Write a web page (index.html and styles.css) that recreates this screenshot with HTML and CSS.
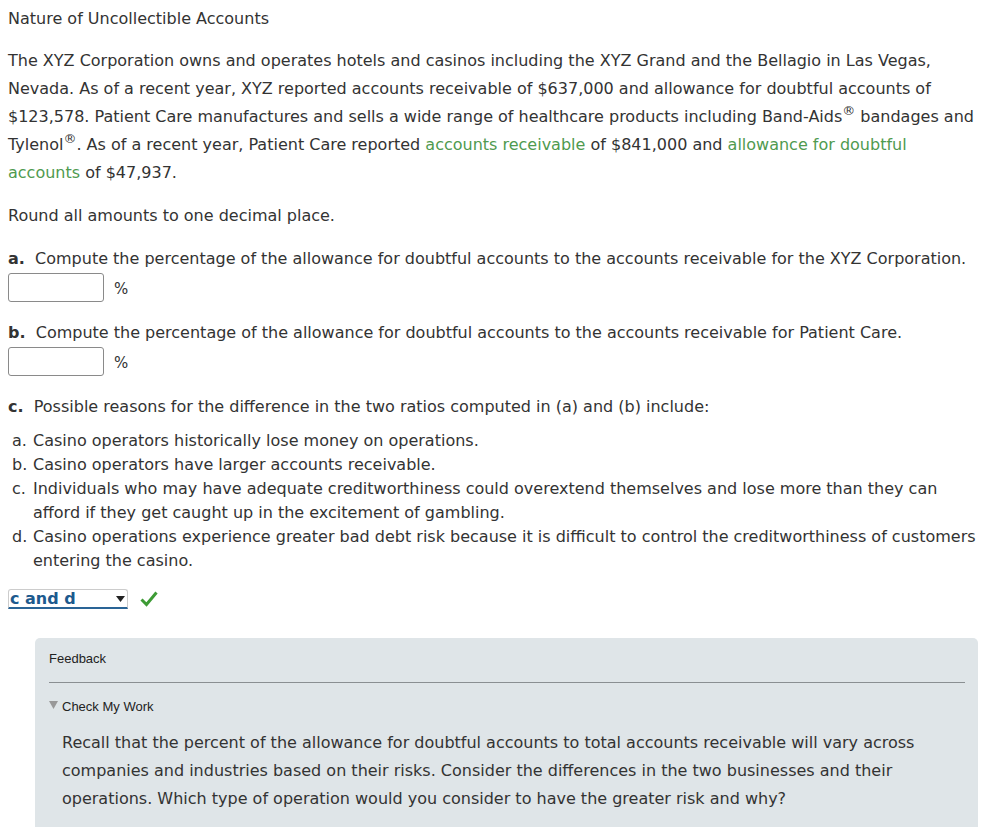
FILE: index.html
```html
<!DOCTYPE html>
<html lang="en">
<head>
<meta charset="utf-8">
<title>Nature of Uncollectible Accounts</title>
<link rel="stylesheet" href="styles.css">
</head>
<body>
<div class="page">
  <h1 class="title">Nature of Uncollectible Accounts</h1>
  <p class="intro">The XYZ Corporation owns and operates hotels and casinos including the XYZ Grand and the Bellagio in Las Vegas, Nevada. As of a recent year, XYZ reported accounts receivable of $637,000 and allowance for doubtful accounts of $123,578. Patient Care manufactures and sells a wide range of healthcare products including Band-Aids<sup class="reg">®</sup> bandages and Tylenol<sup class="reg">®</sup>. As of a recent year, Patient Care reported <span class="term">accounts receivable</span> of $841,000 and <span class="term">allowance for doubtful</span> <span class="term">accounts</span> of $47,937.</p>
  <p class="note">Round all amounts to one decimal place.</p>

  <div class="question">
    <p class="q-text"><b>a.</b>&nbsp; Compute the percentage of the allowance for doubtful accounts to the accounts receivable for the XYZ Corporation.</p>
    <div class="answer-row"><span class="input-box"></span><span class="unit">%</span></div>
  </div>

  <div class="question">
    <p class="q-text"><b>b.</b>&nbsp; Compute the percentage of the allowance for doubtful accounts to the accounts receivable for Patient Care.</p>
    <div class="answer-row"><span class="input-box"></span><span class="unit">%</span></div>
  </div>

  <div class="question">
    <p class="q-text"><b>c.</b>&nbsp; Possible reasons for the difference in the two ratios computed in (a) and (b) include:</p>
    <ol class="options">
      <li><span class="opt-label">a.</span><span>Casino operators historically lose money on operations.</span></li>
      <li><span class="opt-label">b.</span><span>Casino operators have larger accounts receivable.</span></li>
      <li><span class="opt-label">c.</span><span>Individuals who may have adequate creditworthiness could overextend themselves and lose more than they can afford if they get caught up in the excitement of gambling.</span></li>
      <li><span class="opt-label">d.</span><span>Casino operations experience greater bad debt risk because it is difficult to control the creditworthiness of customers entering the casino.</span></li>
    </ol>
    <div class="select-row">
      <span class="select">
        <span class="select-value">c and d</span>
        <svg class="select-arrow" width="9" height="6" viewBox="0 0 9 6"><path d="M0 0 H9 L4.5 6 Z" fill="#222"/></svg>
      </span>
      <svg class="check" width="18" height="16" viewBox="0 0 18 16"><path d="M1.5 8.5 L6.5 13.5 L16.5 1.5" fill="none" stroke="#3d9b35" stroke-width="3" stroke-linejoin="miter"/></svg>
    </div>
  </div>

  <section class="feedback">
    <div class="fb-head">Feedback</div>
    <div class="fb-body">
      <div class="fb-toggle"><svg class="fb-tri" width="9" height="8" viewBox="0 0 9 8"><path d="M0 0 H9 L4.5 8 Z" fill="#999"/></svg><span>Check My Work</span></div>
      <p class="fb-text">Recall that the percent of the allowance for doubtful accounts to total accounts receivable will vary across companies and industries based on their risks. Consider the differences in the two businesses and their operations. Which type of operation would you consider to have the greater risk and why?</p>
    </div>
  </section>
</div>
</body>
</html>
```

FILE: styles.css
```css
html, body {
  margin: 0;
  padding: 0;
  background: #fff;
}
body {
  padding: 0 8px;
  font-family: "DejaVu Sans", Verdana, sans-serif;
  font-size: 16px;
  color: #333;
}
.page {
  padding-top: 8px;
}
.title {
  font-size: 16px;
  font-weight: normal;
  margin: 0;
  line-height: 22px;
}
.intro {
  margin: 17px 0 0;
  line-height: 28px;
}
.reg {
  font-size: 13px;
  line-height: 1;
  vertical-align: 7px;
}
.term {
  color: #4f9a4f;
}
.note {
  margin: 15px 0 0;
  line-height: 28px;
}
.question {
  margin-top: 17px;
}
.question:first-of-type {
  margin-top: 15px;
}
.q-text {
  margin: 0;
  line-height: 28px;
}
.answer-row {
  display: flex;
  align-items: center;
  gap: 10px;
  height: 29px;
}
.input-box {
  display: block;
  width: 94px;
  height: 27px;
  border: 1px solid #8a8a8a;
  border-radius: 3px;
  background: #fff;
}
.unit {
  font-size: 15px;
  line-height: 20px;
  padding-top: 2px;
}
.options {
  list-style: none;
  margin: 8px 0 0;
  padding: 0 0 0 4px;
}
.options li {
  display: flex;
  line-height: 24px;
}
.opt-label {
  flex: none;
  width: 21px;
}
.select-row {
  display: flex;
  align-items: center;
  gap: 12px;
  margin-top: 16px;
}
.select {
  display: flex;
  align-items: center;
  justify-content: space-between;
  box-sizing: border-box;
  width: 120px;
  height: 20px;
  padding: 0 2px 0 1px;
  border: 1px solid #ccc;
  border-bottom: 2px solid #2a6496;
  border-radius: 3px 3px 0 0;
  background: #fff;
}
.select-value {
  color: #1d5a8e;
  font-weight: bold;
  font-size: 16px;
  line-height: 16px;
}
.select-arrow {
  display: block;
}
.check {
  display: block;
}
.feedback {
  margin: 29px -2px 0 27px;
  background: #dfe5e8;
  border-radius: 5px 5px 0 0;
  padding: 13px 13px 14px 14px;
  font-family: "Liberation Sans", Arial, sans-serif;
}
.fb-head {
  font-size: 13px;
  line-height: 16px;
  color: #222;
  padding-bottom: 15px;
  border-bottom: 1px solid #8a8f92;
}
.fb-body {
  padding-top: 16px;
}
.fb-toggle {
  display: flex;
  align-items: center;
  gap: 4px;
  font-size: 13px;
  line-height: 16px;
  color: #222;
}
.fb-tri {
  display: block;
  margin-top: -4px;
}
.fb-text {
  margin: 14px 0 0 13px;
  font-family: "DejaVu Sans", Verdana, sans-serif;
  font-size: 16px;
  line-height: 28px;
  color: #333;
}
```
